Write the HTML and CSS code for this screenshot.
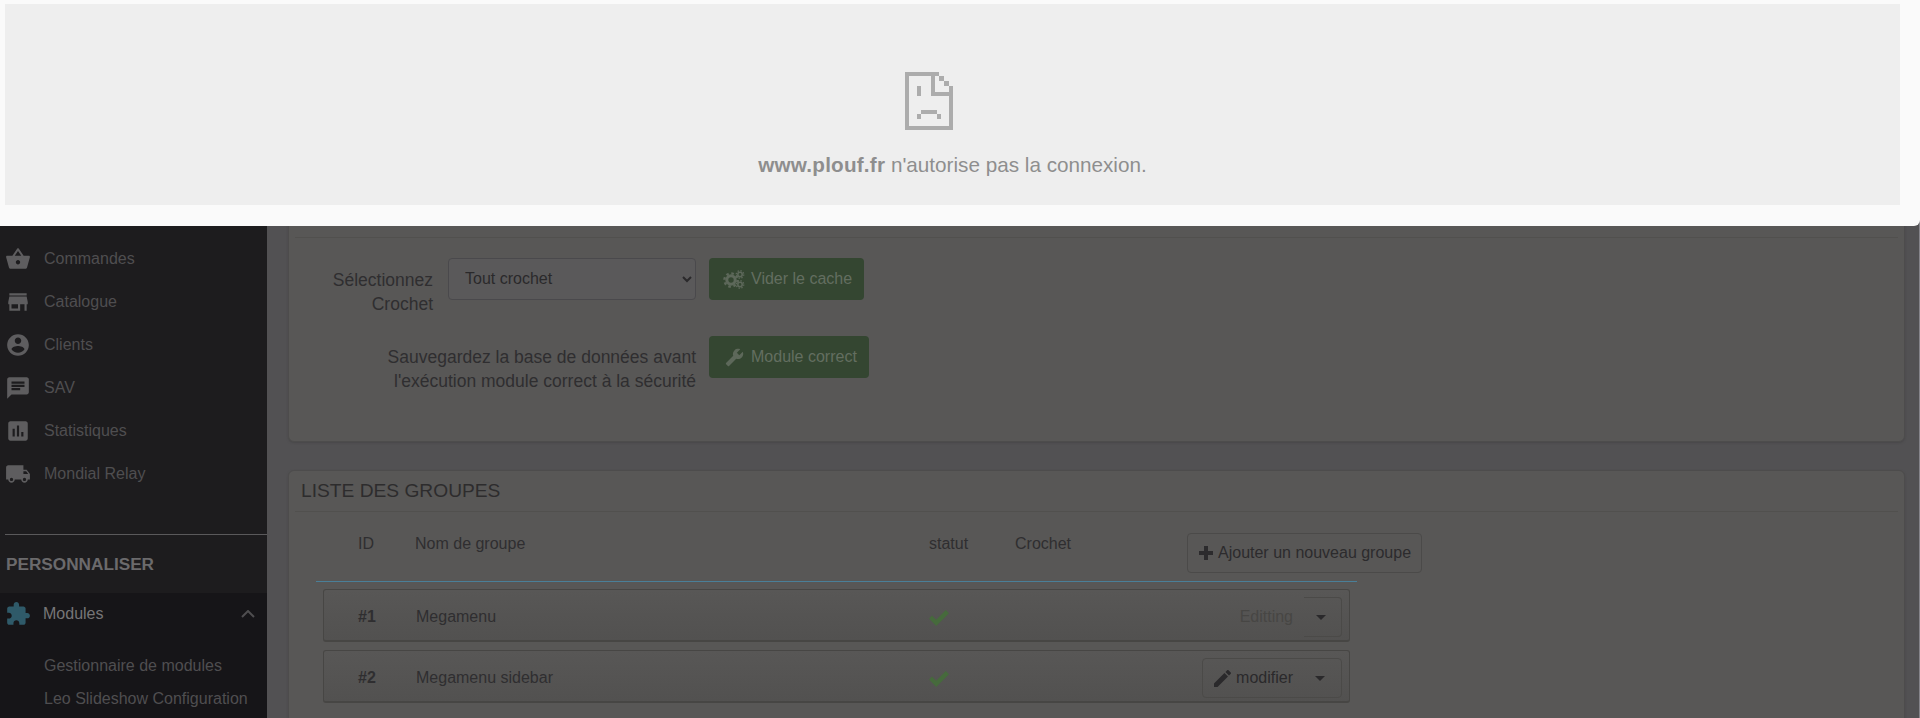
FILE: index.html
```html
<!DOCTYPE html>
<html lang="fr">
<head>
<meta charset="utf-8">
<title>Liste des groupes</title>
<link rel="stylesheet" href="styles.css">
</head>
<body>
<div class="admin">
  <aside class="sidebar">
    <ul class="nav">
      <li class="nav-item"><svg class="nav-icon" viewBox="0 0 24 24"><path d="M17.21 9l-4.38-6.56c-.19-.28-.51-.42-.83-.42-.32 0-.64.14-.83.43L6.79 9H2c-.55 0-1 .45-1 1 0 .09.01.18.04.27l2.54 9.27c.23.84 1 1.46 1.92 1.46h13c.92 0 1.69-.62 1.93-1.46l2.54-9.27L23 10c0-.55-.45-1-1-1h-4.79zM9 9l3-4.4L15 9H9zm3 8c-1.1 0-2-.9-2-2s.9-2 2-2 2 .9 2 2-.9 2-2 2z"/></svg><span>Commandes</span></li>
      <li class="nav-item"><svg class="nav-icon" viewBox="0 0 24 24"><path d="M20 4H4v2h16V4zm1 10v-2l-1-5H4l-1 5v2h1v6h10v-6h4v6h2v-6h1zm-9 4H6v-4h6v4z"/></svg><span>Catalogue</span></li>
      <li class="nav-item"><svg class="nav-icon" viewBox="0 0 24 24"><path d="M12 2C6.48 2 2 6.48 2 12s4.48 10 10 10 10-4.48 10-10S17.52 2 12 2zm0 3c1.66 0 3 1.34 3 3s-1.34 3-3 3-3-1.34-3-3 1.34-3 3-3zm0 14.2c-2.5 0-4.71-1.28-6-3.22.03-1.99 4-3.08 6-3.08 1.99 0 5.97 1.09 6 3.08-1.29 1.94-3.5 3.22-6 3.22z"/></svg><span>Clients</span></li>
      <li class="nav-item"><svg class="nav-icon" viewBox="0 0 24 24"><path d="M20 2H4c-1.1 0-1.99.9-1.99 2L2 22l4-4h14c1.1 0 2-.9 2-2V4c0-1.1-.9-2-2-2zM6 9h12v2H6V9zm8 5H6v-2h8v2zm4-6H6V6h12v2z"/></svg><span>SAV</span></li>
      <li class="nav-item"><svg class="nav-icon" viewBox="0 0 24 24"><path d="M19 3H5c-1.1 0-2 .9-2 2v14c0 1.1.9 2 2 2h14c1.1 0 2-.9 2-2V5c0-1.1-.9-2-2-2zM9 17H7v-7h2v7zm4 0h-2V7h2v10zm4 0h-2v-4h2v4z"/></svg><span>Statistiques</span></li>
      <li class="nav-item"><svg class="nav-icon" viewBox="0 0 24 24"><path d="M20 8h-3V4H3c-1.1 0-2 .9-2 2v11h2c0 1.66 1.34 3 3 3s3-1.34 3-3h6c0 1.66 1.34 3 3 3s3-1.34 3-3h2v-5l-3-4zM6 18.5c-.83 0-1.5-.67-1.5-1.5s.67-1.5 1.5-1.5 1.5.67 1.5 1.5-.67 1.5-1.5 1.5zm13.5-9l1.96 2.5H17V9.5h2.5zm-1.5 9c-.83 0-1.5-.67-1.5-1.5s.67-1.5 1.5-1.5 1.5.67 1.5 1.5-.67 1.5-1.5 1.5z"/></svg><span>Mondial Relay</span></li>
    </ul>
    <hr class="nav-rule">
    <h3 class="nav-section">PERSONNALISER</h3>
    <div class="nav-active">
      <div class="nav-item nav-item-open">
        <svg class="nav-icon nav-icon-teal" viewBox="0 0 24 24"><path d="M20.5 11H19V7c0-1.1-.9-2-2-2h-4V3.5C13 2.12 11.88 1 10.5 1S8 2.12 8 3.5V5H4c-1.1 0-1.99.9-1.99 2v3.8H3.5c1.49 0 2.7 1.21 2.7 2.7s-1.21 2.7-2.7 2.7H2V20c0 1.1.9 2 2 2h3.8v-1.5c0-1.49 1.21-2.7 2.7-2.7 1.49 0 2.7 1.21 2.7 2.7V22H17c1.1 0 2-.9 2-2v-4h1.5c1.38 0 2.5-1.12 2.5-2.5S21.88 11 20.5 11z"/></svg>
        <span>Modules</span>
        <svg class="nav-chevron" viewBox="0 0 14 8"><path d="M1 7l6-6 6 6"/></svg>
      </div>
      <ul class="subnav">
        <li>Gestionnaire de modules</li>
        <li>Leo Slideshow Configuration</li>
      </ul>
    </div>
  </aside>

  <main class="main">
    <section class="card card-tools">
      <div class="card-head card-head-hidden"></div>
      <div class="tools">
        <div class="tool-row">
          <label class="tool-label tool-label-short">Sélectionnez<br>Crochet</label>
          <select class="tool-select"><option>Tout crochet</option></select>
          <button class="btn-green btn-cache" type="button">
            <svg class="btn-icon" width="22" height="19" viewBox="0 0 22 19"><circle class="gear-ring" cx="8" cy="10" r="4.2"/><circle class="gear-teeth" cx="8" cy="10" r="6.6"/><circle class="gear-ring-s" cx="17" cy="4.5" r="2.2"/><circle class="gear-teeth-s" cx="17" cy="4.5" r="3.7"/><circle class="gear-ring-s" cx="17" cy="14.5" r="2.2"/><circle class="gear-teeth-s" cx="17" cy="14.5" r="3.7"/></svg>
            Vider le cache
          </button>
        </div>
        <div class="tool-row">
          <label class="tool-label tool-label-long">Sauvegardez la base de données avant<br>l'exécution module correct à la sécurité</label>
          <button class="btn-green" type="button">
            <svg class="btn-icon btn-icon-wrench" width="19" height="19" viewBox="0 0 24 24"><path d="M1.3 19l9.1-9.1c-.9-2.3-.4-5 1.5-6.9 2-2 5-2.4 7.4-1.3L15 6l3 3 4.4-4.3c1.2 2.4.7 5.4-1.3 7.4-1.9 1.9-4.6 2.4-6.9 1.5l-9.1 9.1c-.4.4-1 .4-1.4 0l-2.3-2.3c-.5-.4-.5-1.1-.1-1.4z"/></svg>
            Module correct
          </button>
        </div>
      </div>
    </section>

    <section class="card card-groups">
      <h2 class="card-head">LISTE DES GROUPES</h2>
      <div class="group-head">
        <span class="col-id">ID</span>
        <span class="col-name">Nom de groupe</span>
        <span class="col-status">statut</span>
        <span class="col-hook">Crochet</span>
        <button class="btn-add" type="button">
          <svg width="14" height="14" viewBox="0 0 14 14"><path d="M5 0h4v5h5v4H9v5H5V9H0V5h5z"/></svg>
          Ajouter un nouveau groupe
        </button>
      </div>
      <div class="group-row">
        <b class="row-id">#1</b>
        <span class="row-name">Megamenu</span>
        <svg class="row-check" width="20" height="16" viewBox="0 0 20 16"><path d="M0 8.5l3-3 4.2 4.2L16.8 0 20 3.2 7.2 16z"/></svg>
        <div class="row-actions">
          <span class="btn-disabled">Editting</span>
          <span class="btn-caret btn-caret-solo"><i class="caret"></i></span>
        </div>
      </div>
      <div class="group-row">
        <b class="row-id">#2</b>
        <span class="row-name">Megamenu sidebar</span>
        <svg class="row-check" width="20" height="16" viewBox="0 0 20 16"><path d="M0 8.5l3-3 4.2 4.2L16.8 0 20 3.2 7.2 16z"/></svg>
        <div class="row-actions row-actions-framed">
          <span class="btn-edit"><svg width="17" height="17" viewBox="3 3 18 18"><path d="M3 17.25V21h3.75L17.81 9.94l-3.75-3.75L3 17.25zM20.71 7.04c.39-.39.39-1.02 0-1.41l-2.34-2.34c-.39-.39-1.02-.39-1.41 0l-1.83 1.83 3.75 3.75 1.83-1.83z"/></svg>modifier</span>
          <span class="btn-caret"><i class="caret"></i></span>
        </div>
      </div>
    </section>
  </main>
</div>

<div class="modal">
  <div class="frame-error">
    <div class="sad-page">
      <svg width="48" height="58" viewBox="0 0 48 58"><path d="M0 0h34v4H4v50h40V24H26V4h4v16h14v-6h4v44H0zM34 4h5v5h-5zM39 9h5v5h-5zM12 14h4v10h-4zM16 38h16v4H16zM12 42h4v5h-4zM32 42h4v5h-4z"/></svg>
    </div>
    <p class="frame-msg"><b>www.plouf.fr</b> n'autorise pas la connexion.</p>
  </div>
</div>
</body>
</html>
```

FILE: styles.css
```css
* { box-sizing: border-box; }
html, body { margin: 0; height: 718px; overflow: hidden; }
body { font-family: "Liberation Sans", Arial, sans-serif; font-size: 16px; line-height: 24px; color: #2f2e30; background: #525153; }

.admin { display: flex; height: 718px; overflow: hidden; border-right: 1px solid #85848a; }

/* sidebar */
.sidebar { flex: none; width: 267px; background: #1d1c1e; padding-top: 237px; color: #4f4e50; }
.nav { list-style: none; margin: 0; padding: 0; }
.nav-item { display: flex; align-items: center; height: 43px; padding-left: 5px; gap: 13px; }
.nav-icon { width: 26px; height: 26px; fill: #5e5d5f; flex: none; }
.nav-icon-teal { fill: #2f5a69; }
.nav-rule { border: 0; border-top: 1px solid #5a595b; margin: 39px 0 0 5px; }
.nav-section { margin: 0; padding-left: 6px; height: 58px; line-height: 58px; font-size: 17.2px; font-weight: 700; color: #6b6a6c; }
.nav-active { background: #161518; padding-bottom: 30px; }
.nav-item-open { height: 42px; gap: 12px; color: #767577; }
.nav-chevron { width: 14px; height: 8px; margin-left: auto; margin-right: 12px; fill: none; stroke: #4f4e50; stroke-width: 2; }
.subnav { list-style: none; margin: 0; padding: 14px 0 0 44px; }
.subnav li { height: 33px; line-height: 33px; white-space: nowrap; }

/* main column */
.main { flex: 1; min-width: 0; padding: 0 14px 0 21px; }
.card { background: #585756; border: 1px solid #4d4c4c; border-radius: 6px; box-shadow: 0 1px 2px #484749; }
.card-tools { margin-top: 195px; }
.card-groups { margin-top: 28px; height: 300px; }
.card-head { margin: 0 6px; height: 41px; border-bottom: 1px solid #51504e; font-size: 19.2px; font-weight: 400; line-height: 40px; padding-left: 6px; color: #2d2c2d; }
.card-head-hidden { height: 42px; }

.tools { padding: 20px 0 48px; }
.tool-row { display: flex; align-items: flex-start; margin-bottom: 20px; }
.tool-row:last-child { margin-bottom: 0; }
.tool-label { flex: none; text-align: right; padding-top: 9px; font-size: 17.5px; }
.tool-label-short { width: 144px; margin-right: 15px; padding-top: 10px; }
.tool-label-long { width: 407px; margin-right: 13px; }
.tool-select { flex: none; width: 248px; height: 42px; margin-right: 13px; padding: 0 8px 2px 12px; font: 16px "Liberation Sans", Arial, sans-serif; color: #2a292b; background: #5a595a; border: 1px solid #4a494c; border-radius: 4px; }
.btn-green { display: flex; align-items: center; gap: 6px; height: 42px; padding: 0 12px 0 14px; border: 0; border-radius: 4px; background: #344631; color: #636e60; font: 16px "Liberation Sans", Arial, sans-serif; white-space: nowrap; }
.btn-icon { fill: #5d685a; flex: none; }
.btn-icon-wrench { margin: 0 1px 0 2px; }
.gear-ring, .gear-ring-s { fill: none; stroke: #5d685a; }
.gear-ring { stroke-width: 3; }
.gear-ring-s { stroke-width: 1.6; }
.gear-teeth, .gear-teeth-s { fill: none; stroke: #5d685a; }
.gear-teeth { stroke-width: 2.4; stroke-dasharray: 2.6 2.6; }
.gear-teeth-s { stroke-width: 1.4; stroke-dasharray: 1.4 1.5; }

/* groups */
.group-head { display: flex; align-items: flex-start; width: 1041px; height: 70px; margin-left: 27px; padding: 20px 0 0 42px; border-bottom: 1px solid #4a7f98; white-space: nowrap; }
.col-id { flex: none; width: 57px; }
.col-name { flex: none; width: 514px; }
.col-status { flex: none; width: 86px; }
.col-hook { flex: none; width: 172px; }
.btn-add { flex: none; display: flex; align-items: center; gap: 5px; width: 235px; height: 40px; margin-top: 1px; padding: 0 0 0 11px; background: #585756; border: 1px solid #4b4a49; border-radius: 4px; color: #2c2b2d; font: 16px "Liberation Sans", Arial, sans-serif; white-space: nowrap; }
.btn-add svg { fill: #2c2b2d; flex: none; }

.group-row { display: flex; align-items: center; width: 1027px; height: 53px; margin: 7px 0 0 34px; padding: 4px 7px 0 34px; background: linear-gradient(#585756, #525150); border: 1px solid #474644; border-bottom-width: 2px; border-radius: 3px; }
.group-row + .group-row { margin-top: 8px; }
.row-id { flex: none; width: 58px; }
.row-name { flex: none; width: 513px; }
.row-check { flex: none; fill: #466a3c; margin-top: 1px; }
.row-actions { display: flex; align-items: center; height: 40px; margin-left: auto; }
.row-actions-framed { border: 1px solid #4b4a48; border-radius: 4px; }
.btn-disabled { color: #474644; margin-right: 11px; }
.btn-edit { display: flex; align-items: center; gap: 5px; padding-left: 11px; color: #2a292b; }
.btn-edit svg { fill: #2a292b; flex: none; }
.btn-caret { display: flex; align-items: center; justify-content: center; width: 48px; height: 38px; padding: 0 4px 0 10px; }
.btn-caret-solo { width: 38px; height: 40px; padding: 0 4px 0 0; border: 1px solid #4b4a48; border-left: 0; border-radius: 0 4px 4px 0; }
.caret { width: 0; height: 0; border: 5px solid transparent; border-top: 5px solid #2a292b; border-bottom: 0; }

/* blocked-frame dialog lying over the page */
.modal { position: absolute; top: 0; left: 0; width: 100%; height: 226px; padding: 4px 20px 21px 5px; background: #fafafa; border-radius: 0 0 6px 0; }
.frame-error { display: flex; flex-direction: column; align-items: center; height: 201px; padding-top: 68px; background: #eeeeee; color: #8e8e8e; }
.sad-page { width: 96px; height: 58px; }
.sad-page svg { display: block; fill: #acacac; }
.frame-msg { margin: 23px 0 0; font-size: 20.7px; line-height: 24px; white-space: nowrap; }
.frame-msg b { letter-spacing: .2px; }
```
